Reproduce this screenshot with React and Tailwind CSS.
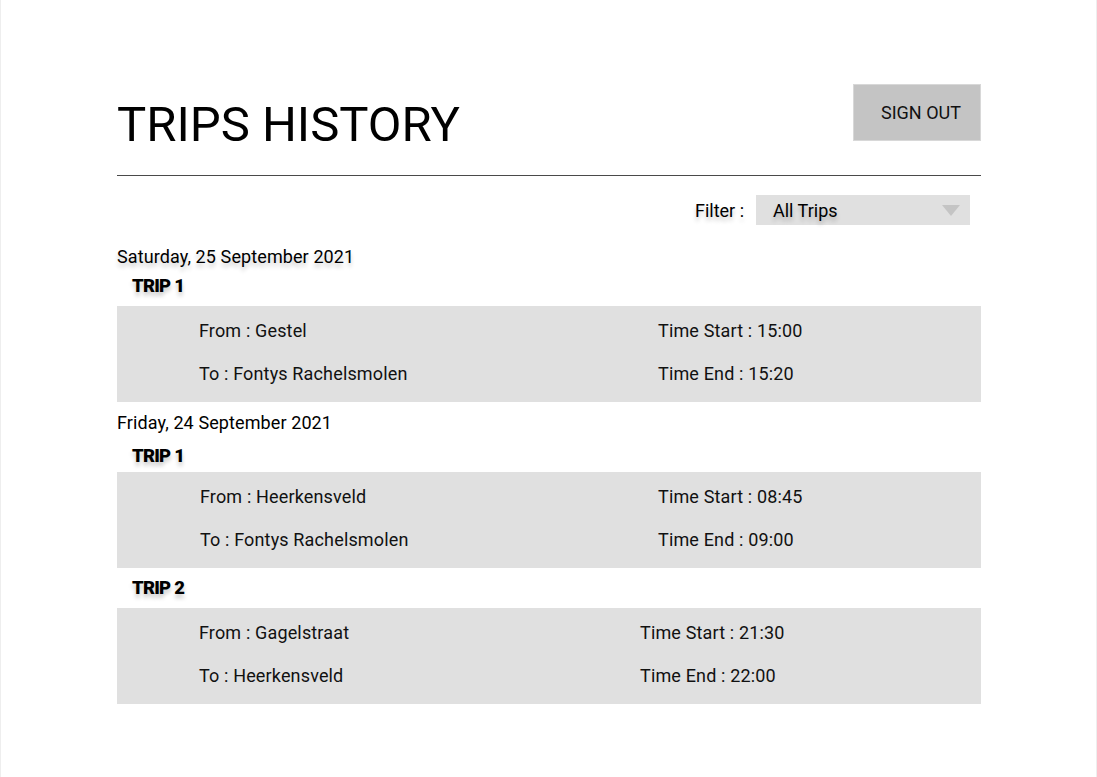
const DAYS = [
  {
    date: 'Saturday, 25 September 2021',
    shadow: true,
    gap: 'mt-[21px]',
    trips: [
      { label: 'TRIP 1', from: 'Gestel', to: 'Fontys Rachelsmolen', start: '15:00', end: '15:20', cols: 'grid-cols-[459px_1fr]', labelGap: 'mt-[9px]', cardGap: 'mt-[9px]' }
    ]
  },
  {
    date: 'Friday, 24 September 2021',
    shadow: false,
    gap: 'mt-[10px]',
    trips: [
      { label: 'TRIP 1', from: 'Heerkensveld', to: 'Fontys Rachelsmolen', start: '08:45', end: '09:00', cols: 'grid-cols-[458px_1fr]', labelGap: 'mt-[13px]', cardGap: 'mt-[5px]', pad: 'pl-[83px]' },
      { label: 'TRIP 2', from: 'Gagelstraat', to: 'Heerkensveld', start: '21:30', end: '22:00', cols: 'grid-cols-[441px_1fr]', labelGap: 'mt-[10px]', cardGap: 'mt-[9px]' }
    ]
  }
];

const shadowText = '[text-shadow:0_4px_4px_rgba(0,0,0,0.22)]';

function TripCard({ trip }) {
  return (
    <>
      <div className={`${trip.labelGap} pl-[15px] text-[18.5px] leading-[21px] font-black tracking-[-0.04em] text-black ${shadowText}`}>
        {trip.label}
      </div>
      <div className={`${trip.cardGap} bg-[#e0e0e0] pt-[14px] pb-[18px] ${trip.pad || 'pl-[82px]'} grid ${trip.cols} gap-y-[22px] text-[18px] leading-[21px] tracking-[0.15px] text-[#111]`}>
        <div>From : {trip.from}</div>
        <div>Time Start : {trip.start}</div>
        <div>To : {trip.to}</div>
        <div>Time End : {trip.end}</div>
      </div>
    </>
  );
}

export default function App() {
  return (
    <div className="min-h-screen bg-white border-x border-[#eeeeee]" style={{ fontFamily: 'Roboto, "Liberation Sans", sans-serif' }}>
      <div className="ml-[116px] w-[864px] pt-[84px] pb-[60px]">
        <header className="h-[91px] flex items-start justify-between">
          <h1 className="mt-[16px] text-[49px] leading-[49px] font-normal text-black">TRIPS HISTORY</h1>
          <button className="w-[128px] h-[57px] bg-[#c4c4c4] border border-[#d8d8d8] text-left pl-[27px] text-[18px] leading-[21px] text-[#111]">
            SIGN OUT
          </button>
        </header>
        <div className="h-px bg-[#4a4a4a]" />

        <div className="mt-[19px] flex items-center justify-end gap-[12px] pr-[11px]">
          <span className={`text-[18px] leading-[21px] text-black ${shadowText}`}>Filter :</span>
          <div className="w-[214px] h-[30px] bg-[#e0e0e0] flex items-center justify-between pl-[17px] pr-[10px]">
            <span className={`text-[18px] leading-[21px] text-black ${shadowText}`}>All Trips</span>
            <svg width="18" height="11" viewBox="0 0 18 11">
              <polygon points="0,0 18,0 9,11" fill="#c4c4c4" />
            </svg>
          </div>
        </div>

        {DAYS.map(day => (
          <section key={day.date}>
            <div className={`${day.gap} text-[18px] leading-[21px] tracking-[0.1px] text-black ${day.shadow ? shadowText : ''}`}>
              {day.date}
            </div>
            {day.trips.map(trip => (
              <TripCard key={trip.label} trip={trip} />
            ))}
          </section>
        ))}
      </div>
    </div>
  );
}
